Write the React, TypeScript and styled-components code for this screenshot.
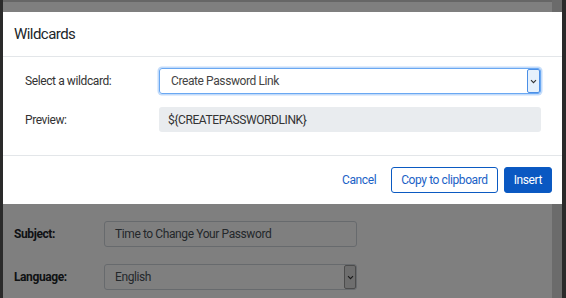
import React from "react";
import styled, { createGlobalStyle } from "styled-components";

const GlobalStyle = createGlobalStyle`
  html, body {
    margin: 0;
    padding: 0;
    width: 566px;
    height: 298px;
    overflow: hidden;
    font-family: Roboto, "Liberation Sans", Arial, sans-serif;
    letter-spacing: -0.4px;
  }
`;

const Frame = styled.div`
  position: relative;
  width: 566px;
  height: 298px;
  display: flex;
  background: #555;
  overflow: hidden;
`;

const SideEdge = styled.div<{ $w: number }>`
  width: ${(p) => p.$w}px;
  flex: none;
  background: #555;
`;

const Page = styled.div`
  flex: 1;
  display: flex;
  flex-direction: column;
  background: #fff;
  border-top: 2px solid #ccc;
`;

const Scrollbar = styled.div`
  width: 10px;
  flex: none;
  background: #d6d6d6;
`;

const Form = styled.div`
  display: flex;
  flex-direction: column;
  gap: 17px;
  padding: 219px 0 0 11px;
`;

const FormRow = styled.div`
  display: flex;
  align-items: center;
`;

const FormLabel = styled.label`
  width: 90px;
  font-size: 12px;
  font-weight: 700;
  color: #212529;
`;

const TextField = styled.div`
  width: 253px;
  height: 26px;
  box-sizing: border-box;
  border: 1px solid #ced4da;
  border-radius: 3px;
  display: flex;
  align-items: center;
  justify-content: space-between;
  padding-left: 10px;
  font-size: 12px;
  color: #495057;
`;

const FieldArrow = styled.div`
  width: 12px;
  height: 24px;
  box-sizing: border-box;
  border: 1px solid #999;
  border-radius: 2px;
  background: #ddd;
  display: flex;
  align-items: center;
  justify-content: center;
`;

const Backdrop = styled.div`
  position: absolute;
  inset: 0;
  background: rgba(0, 0, 0, 0.5);
`;

const Modal = styled.div`
  position: absolute;
  left: 3px;
  top: 12px;
  width: 559px;
  height: 192px;
  background: #fff;
  display: flex;
  flex-direction: column;
`;

const Header = styled.div`
  height: 44px;
  flex: none;
  display: flex;
  align-items: center;
  padding: 0 11px;
  border-bottom: 1px solid #e3e6e9;
  font-size: 15px;
  letter-spacing: -0.55px;
  color: #212529;
`;

const Body = styled.div`
  flex: none;
  display: flex;
  flex-direction: column;
  gap: 13px;
  padding: 11px 21px 23px 22px;
  border-bottom: 1px solid #e3e6e9;
`;

const Row = styled.div`
  display: flex;
  align-items: center;
`;

const Label = styled.div`
  width: 134px;
  flex: none;
  font-size: 12px;
  color: #333;
`;

const Select = styled.div`
  flex: 1;
  height: 26px;
  box-sizing: border-box;
  border: 1px solid #6aa8f2;
  border-radius: 3px;
  box-shadow: 0 0 0 1.5px rgba(120, 175, 245, 0.45);
  display: flex;
  align-items: center;
  justify-content: space-between;
  padding-left: 11px;
  font-size: 12px;
  color: #444;
`;

const SelectArrow = styled.div`
  width: 13px;
  height: 24px;
  box-sizing: border-box;
  border: 1px solid #4b8fe6;
  border-radius: 2px;
  background: #e6f1fc;
  display: flex;
  align-items: center;
  justify-content: center;
`;

const Preview = styled.div`
  flex: 1;
  height: 25px;
  box-sizing: border-box;
  border-radius: 3px;
  background: #e9ecef;
  display: flex;
  align-items: center;
  padding-left: 9px;
  font-size: 12px;
  color: #333;
`;

const Footer = styled.div`
  flex: 1;
  display: flex;
  align-items: center;
  justify-content: flex-end;
  gap: 6px;
  padding-right: 10px;
`;

const Button = styled.button<{ $variant: "link" | "outline" | "primary" }>`
  height: 26px;
  box-sizing: border-box;
  border-radius: 3px;
  font-family: inherit;
  font-size: 12px;
  letter-spacing: -0.4px;
  padding: 0 9px;
  cursor: pointer;
  border: 1px solid
    ${(p) => (p.$variant === "link" ? "transparent" : "#0b5ac2")};
  background: ${(p) => (p.$variant === "primary" ? "#0a58c2" : "#fff")};
  color: ${(p) => (p.$variant === "primary" ? "#fff" : "#1a62c6")};
  margin-right: ${(p) => (p.$variant === "link" ? "-1px" : "0")};
`;

const Chevron = ({ color }: { color: string }) => (
  <svg width="7" height="5" viewBox="0 0 7 5">
    <path d="M1 1.2 L3.5 3.7 L6 1.2" fill="none" stroke={color} strokeWidth="1.1" />
  </svg>
);

export default function App() {
  return (
    <>
      <GlobalStyle />
      <Frame>
        <SideEdge $w={3} />
        <Page>
          <Form>
            <FormRow>
              <FormLabel>Subject:</FormLabel>
              <TextField>Time to Change Your Password</TextField>
            </FormRow>
            <FormRow>
              <FormLabel>Language:</FormLabel>
              <TextField>
                English
                <FieldArrow>
                  <Chevron color="#333" />
                </FieldArrow>
              </TextField>
            </FormRow>
          </Form>
        </Page>
        <Scrollbar />
        <SideEdge $w={4} />
        <Backdrop />
        <Modal>
          <Header>Wildcards</Header>
          <Body>
            <Row>
              <Label>Select a wildcard:</Label>
              <Select>
                Create Password Link
                <SelectArrow>
                  <Chevron color="#333" />
                </SelectArrow>
              </Select>
            </Row>
            <Row>
              <Label>Preview:</Label>
              <Preview>{"${CREATEPASSWORDLINK}"}</Preview>
            </Row>
          </Body>
          <Footer>
            <Button $variant="link">Cancel</Button>
            <Button $variant="outline">Copy to clipboard</Button>
            <Button $variant="primary">Insert</Button>
          </Footer>
        </Modal>
      </Frame>
    </>
  );
}
